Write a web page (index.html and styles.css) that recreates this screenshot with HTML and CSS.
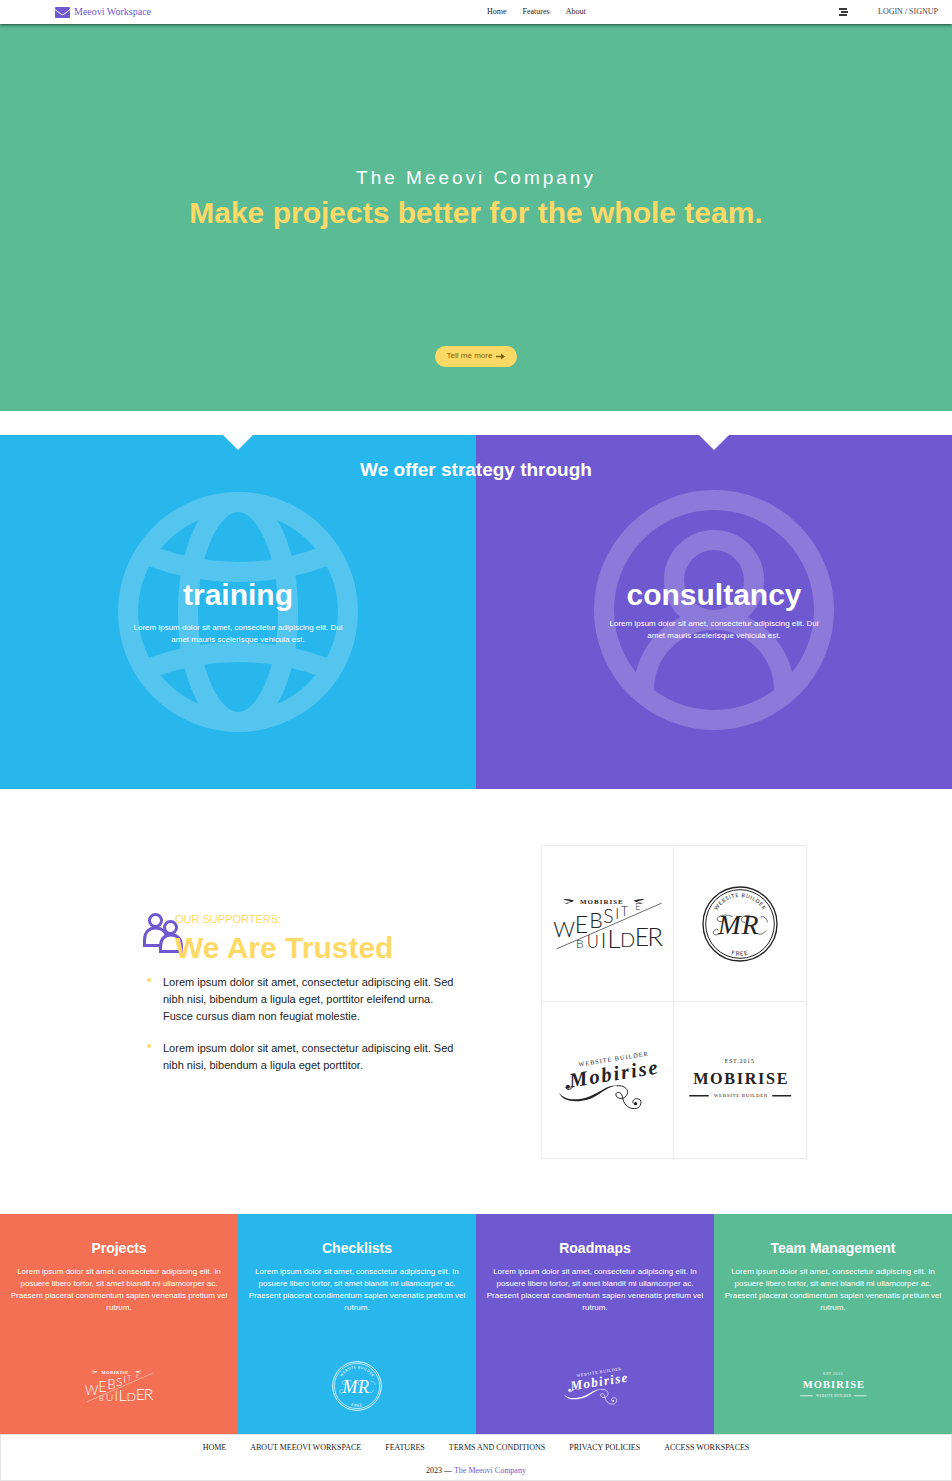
FILE: index.html
```html
<!DOCTYPE html>
<html lang="en">
<head>
<meta charset="utf-8">
<title>Meeovi Workspace</title>
<link rel="stylesheet" href="styles.css">
</head>
<body>
<svg class="sprite" aria-hidden="true">
  <defs>
    <path id="seal-top" d="M34 113 A80 80 0 0 1 194 113"/>
    <path id="seal-bottom" d="M18 113 A96 96 0 0 0 210 113"/>
  </defs>
  <symbol id="logo-website" viewBox="0 0 336 170">
    <g fill="currentColor">
      <text x="84" y="26" class="logo-serif" font-size="21" font-weight="bold" letter-spacing="3">MOBIRISE</text>
      <path d="M33 12 q18 -2 34 5 q-12 8 -25 4 q10 0 14 -3 q-12 -1 -23 -6z M35 20 q6 6 16 4 q-9 6 -16 -4z M278 12 q-18 -2 -34 5 q12 8 25 4 q-10 0 -14 -3 q12 -1 23 -6z M276 20 q-6 6 -16 4 q9 6 16 -4z"/>
      <g class="logo-thin">
        <text x="4" y="126" font-size="64">W</text>
        <text x="68" y="115" font-size="70">E</text>
        <text x="112" y="100" font-size="64">B</text>
        <text x="154" y="85" font-size="58">S</text>
        <text x="190" y="72" font-size="46">I</text>
        <text x="206" y="62" font-size="38">T</text>
        <text x="250" y="46" font-size="26">E</text>
        <text x="72" y="158" font-size="36">B</text>
        <text x="104" y="158" font-size="50">U</text>
        <text x="146" y="158" font-size="64">I</text>
        <text x="166" y="158" font-size="78">L</text>
        <text x="204" y="156" font-size="60">D</text>
        <text x="248" y="154" font-size="74">E</text>
        <text x="286" y="153" font-size="78">R</text>
      </g>
    </g>
    <path d="M14 161 L329 24" fill="none" stroke="currentColor" stroke-width="2"/>
  </symbol>
  <symbol id="logo-seal" viewBox="0 0 228 228">
    <g fill="none" stroke="currentColor">
      <circle cx="114" cy="114" r="111" stroke-width="4"/>
      <circle cx="114" cy="114" r="103" stroke-width="3"/>
      <path d="M54 143 C38 152 30 142 36 134 Q44 126 50 133 M66 104 C48 112 40 100 50 92 Q68 82 92 92 M130 110 C108 106 118 86 145 88 M166 143 q16 6 26 -10 M176 92 q20 0 20 17" stroke-width="2"/>
    </g>
    <g fill="currentColor">
      <text class="logo-seal-text" font-size="16" letter-spacing="2" text-anchor="middle"><textPath href="#seal-top" startOffset="50%">WEBSITE BUILDER</textPath></text>
      <text class="logo-seal-text" font-size="18" letter-spacing="3" text-anchor="middle"><textPath href="#seal-bottom" startOffset="50%">FREE</textPath></text>
      <text class="logo-script" x="48" y="144" font-size="82">M</text>
      <text class="logo-script" x="119" y="144" font-size="82">R</text>
    </g>
  </symbol>
  <symbol id="logo-script" viewBox="0 0 300 178">
    <g fill="currentColor">
      <text class="logo-serif" transform="translate(62 47) rotate(-9)" font-size="19" letter-spacing="3">WEBSITE BUILDER</text>
      <text class="logo-script" transform="translate(36 110) rotate(-9)" font-size="62" font-weight="bold" letter-spacing="6">Mobirise</text>
      <path d="M2 126 C20 150 58 150 94 137 C130 123 150 99 183 105 C150 104 132 129 99 143 C57 158 13 154 2 126z"/>
      <circle cx="233" cy="159" r="5"/>
      <circle cx="29" cy="108" r="6"/>
    </g>
    <path d="M176 105 C207 102 218 125 201 139 C188 149 171 139 174 129 C177 122 191 124 193 136 C196 157 207 174 230 174 C252 174 256 145 239 144 C229 143 222 150 226 158 M23 108 C22 120 40 118 44 106" fill="none" stroke="currentColor" stroke-width="3"/>
  </symbol>
  <symbol id="logo-est" viewBox="0 6 310 130">
    <g fill="currentColor" text-anchor="middle">
      <text class="logo-serif" x="153" y="18" font-size="17" letter-spacing="3">EST.2015</text>
      <text class="logo-serif" x="157" y="82" font-size="49" font-weight="bold" letter-spacing="5">MOBIRISE</text>
      <text class="logo-serif" x="156" y="122" font-size="15" letter-spacing="2">WEBSITE BUILDER</text>
      <path d="M0 115 H59 V119 H0z M251 115 H308 V119 H251z"/>
    </g>
  </symbol>
</svg>

<header class="topbar">
  <a class="brand" href="#">
    <svg class="brand-icon" viewBox="0 0 15 11" aria-hidden="true">
      <rect width="15" height="11" rx="1" fill="currentColor"/>
      <path d="M0 2.500 L6 7.200 Q7.500 8.200 9 7.200 L15 2.500" fill="none" stroke="#fff"/>
    </svg>
    Meeovi Workspace
  </a>
  <nav class="topnav" aria-label="Main">
    <a href="#">Home</a>
    <a href="#features">Features</a>
    <a href="#about">About</a>
  </nav>
  <div class="account">
    <button class="menu" type="button" aria-label="Menu">
      <svg viewBox="0 0 9 8" aria-hidden="true"><path d="M0 1 H8 M2 4 H9 M0 7 H8" stroke="currentColor" stroke-width="2"/></svg>
    </button>
    <a class="login" href="#">LOGIN / SIGNUP</a>
  </div>
</header>

<section class="hero">
  <p class="hero-kicker">The Meeovi Company</p>
  <h1 class="hero-title">Make projects better for the whole team.</h1>
  <a class="hero-button" href="#features">Tell me more
    <svg viewBox="0 0 9 7" aria-hidden="true"><path d="M0 3.500 H7" stroke="currentColor" stroke-width="1.500"/><path d="M5 0.500 L9 3.500 L5 6.500z" fill="currentColor"/></svg>
  </a>
</section>

<section class="strategy" id="features">
  <h2 class="strategy-title">We offer strategy through</h2>
  <article class="offer blue">
    <svg class="offer-icon" viewBox="-120 -120 240 240" aria-hidden="true">
      <g fill="none" stroke="#fff" stroke-width="20">
        <circle r="110"/><ellipse rx="50" ry="110"/>
        <path d="M-88 -56 Q0 -24 88 -56 M-88 56 Q0 24 88 56"/>
      </g>
    </svg>
    <div class="offer-text">
      <h3>training</h3>
      <p>Lorem ipsum dolor sit amet, consectetur adipiscing elit. Dui amet mauris scelerisque vehicula est.</p>
    </div>
  </article>
  <article class="offer purple">
    <svg class="offer-icon raised" viewBox="-120 -120 240 240" aria-hidden="true">
      <g fill="none" stroke="#fff" stroke-width="20">
        <circle r="110"/><circle cy="-30" r="40"/>
        <path d="M-70 80 A70 70 0 0 1 70 80"/>
      </g>
    </svg>
    <div class="offer-text close">
      <h3>consultancy</h3>
      <p>Lorem ipsum dolor sit amet, consectetur adipiscing elit. Dui amet mauris scelerisque vehicula est.</p>
    </div>
  </article>
</section>

<section class="supporters" id="about">
  <div class="trust">
    <div class="trust-head">
      <svg class="trust-icon" viewBox="0 0 40 40" aria-hidden="true">
        <g fill="#fff" stroke="currentColor" stroke-width="3">
          <path d="M1.500 32.500 V27 C1.500 19 6 15 12.500 15 S24 19 24 27 V32.500z"/>
          <circle cx="12.500" cy="7.500" r="6"/>
          <path d="M17.500 38.500 V34 C17.500 26 21 22 28 22 S38.500 26 38.500 34 V38.500z"/>
          <circle cx="27.500" cy="14.500" r="6"/>
        </g>
      </svg>
      <div class="trust-title">
        <p>OUR SUPPORTERS:</p>
        <h2>We Are Trusted</h2>
      </div>
    </div>
    <ul class="trust-list">
      <li>Lorem ipsum dolor sit amet, consectetur adipiscing elit. Sed nibh nisi, bibendum a ligula eget, porttitor eleifend urna. Fusce cursus diam non feugiat molestie.</li>
      <li>Lorem ipsum dolor sit amet, consectetur adipiscing elit. Sed nibh nisi, bibendum a ligula eget porttitor.</li>
    </ul>
  </div>
  <div class="logos">
    <div><svg class="mark website"><use href="#logo-website"/></svg></div>
    <div><svg class="mark seal"><use href="#logo-seal"/></svg></div>
    <div><svg class="mark script"><use href="#logo-script"/></svg></div>
    <div><svg class="mark est"><use href="#logo-est"/></svg></div>
  </div>
</section>

<section class="cards">
  <article class="card coral">
    <h3>Projects</h3>
    <p>Lorem ipsum dolor sit amet, consectetur adipiscing elit. In posuere libero tortor, sit amet blandit mi ullamcorper ac. Praesent placerat condimentum sapien venenatis pretium vel rutrum.</p>
    <div class="card-logo"><svg class="mark website"><use href="#logo-website"/></svg></div>
  </article>
  <article class="card blue">
    <h3>Checklists</h3>
    <p>Lorem ipsum dolor sit amet, consectetur adipiscing elit. In posuere libero tortor, sit amet blandit mi ullamcorper ac. Praesent placerat condimentum sapien venenatis pretium vel rutrum.</p>
    <div class="card-logo"><svg class="mark seal"><use href="#logo-seal"/></svg></div>
  </article>
  <article class="card purple">
    <h3>Roadmaps</h3>
    <p>Lorem ipsum dolor sit amet, consectetur adipiscing elit. In posuere libero tortor, sit amet blandit mi ullamcorper ac. Praesent placerat condimentum sapien venenatis pretium vel rutrum.</p>
    <div class="card-logo"><svg class="mark script"><use href="#logo-script"/></svg></div>
  </article>
  <article class="card green">
    <h3>Team Management</h3>
    <p>Lorem ipsum dolor sit amet, consectetur adipiscing elit. In posuere libero tortor, sit amet blandit mi ullamcorper ac. Praesent placerat condimentum sapien venenatis pretium vel rutrum.</p>
    <div class="card-logo"><svg class="mark est"><use href="#logo-est"/></svg></div>
  </article>
</section>

<footer class="footer">
  <nav class="footer-nav" aria-label="Footer">
    <a href="#">HOME</a>
    <a href="#">ABOUT MEEOVI WORKSPACE</a>
    <a href="#">FEATURES</a>
    <a href="#">TERMS AND CONDITIONS</a>
    <a href="#">PRIVACY POLICIES</a>
    <a href="#">ACCESS WORKSPACES</a>
  </nav>
  <p class="copyright">2023 — <a href="#">The Meeovi Company</a></p>
</footer>
</body>
</html>
```
FILE: styles.css
```css
* { box-sizing: border-box; }
body {
  margin: 0;
  background: #fff;
  color: #232323;
  font-family: "Liberation Sans", Arial, sans-serif;
  font-size: 8px;
  line-height: 12px;
}
h1, h2, h3, p, ul { margin: 0; padding: 0; }
a { color: inherit; text-decoration: none; }
svg { display: block; }
.sprite { display: none; }

.blue { background: #28b7ec; }
.purple { background: #6f59d1; }
.green { background: #5abb95; }
.coral { background: #f37054; }

.topbar {
  position: relative;
  display: grid;
  grid-template-columns: 487fr 352fr 113fr;
  align-items: center;
  height: 24px;
  background: #fff;
  box-shadow: 0 1px 3px rgba(0, 0, 0, 0.6);
  font-family: "Liberation Serif", "Times New Roman", serif;
}
.brand {
  display: flex;
  align-items: center;
  gap: 4px;
  padding-left: 55px;
  color: #6f59d1;
  font-size: 10px;
}
.brand-icon { width: 15px; height: 11px; }
.topnav { display: flex; gap: 16px; }
.account {
  display: flex;
  align-items: center;
  justify-content: space-between;
  padding-right: 14px;
}
.menu { padding: 0; border: 0; background: none; color: #3a3a3a; }
.menu svg { width: 9px; height: 8px; }
.login { color: #444; white-space: nowrap; }

.hero {
  display: flex;
  flex-direction: column;
  align-items: center;
  padding: 142px 16px 44px;
  background: #5abb95;
  text-align: center;
}
.hero-kicker { color: #fff; font-size: 19px; line-height: 24px; letter-spacing: 3px; }
.hero-title { margin-top: 5px; color: #ffd966; font-size: 30px; line-height: 36px; }
.hero-button {
  display: flex;
  align-items: center;
  gap: 4px;
  margin-top: 115px;
  padding: 4px 12px 5px;
  border-radius: 12px;
  background: #ffd966;
  color: #7c5f00;
}
.hero-button svg { width: 9px; height: 7px; }

.strategy {
  position: relative;
  display: grid;
  grid-template-columns: 1fr 1fr;
  margin-top: 24px;
}
.strategy-title {
  position: absolute;
  inset: 23px 0 auto;
  z-index: 1;
  color: #fff;
  font-size: 19px;
  line-height: 24px;
  text-align: center;
}
.offer {
  display: grid;
  justify-items: center;
  padding: 57px 16px;
  color: #fff;
  text-align: center;
}
.offer::before {
  content: "";
  position: absolute;
  top: 0;
  width: 30px;
  height: 15px;
  background: #fff;
  clip-path: polygon(0 0, 100% 0, 50% 100%);
}
.offer-icon { grid-area: 1 / 1; width: 240px; height: 240px; opacity: 0.2; }
.offer-icon.raised { margin-top: -2px; }
.offer-text { grid-area: 1 / 1; width: 216px; padding-top: 84px; }
.offer-text h3 { font-size: 30px; line-height: 38px; }
.offer-text p { margin-top: 8px; }
.offer-text.close p { margin-top: 4px; }

.supporters {
  display: grid;
  grid-template-columns: 320px 266px;
  justify-content: center;
  align-items: center;
  column-gap: 78px;
  padding: 56px 17px 55px 15px;
}
.trust { padding-bottom: 20px; }
.trust-head { display: flex; align-items: flex-start; }
.trust-icon { width: 40px; height: 40px; margin-top: 2px; color: #6f59d1; }
.trust-title { position: relative; margin-left: -8px; color: #ffd966; }
.trust-title p { font-size: 11px; line-height: 16px; }
.trust-title h2 { margin-top: 3px; font-size: 30px; line-height: 36px; }
.trust-list { margin-top: 8px; padding-left: 4px; list-style: none; font-size: 11px; line-height: 17px; }
.trust-list li { display: flex; gap: 12px; }
.trust-list li + li { margin-top: 15px; }
.trust-list li::before {
  content: "";
  flex: none;
  width: 4px;
  height: 4px;
  margin-top: 4px;
  border-radius: 50%;
  background: #ffd966;
}
.logos {
  display: grid;
  grid-template-columns: 1fr 1fr;
  border: 1px solid #ebebeb;
  color: #232323;
}
.logos > div {
  display: flex;
  align-items: center;
  justify-content: center;
  min-height: 156px;
}
.logos > div:nth-child(odd) { border-right: 1px solid #ebebeb; }
.logos > div:nth-child(-n+2) { border-bottom: 1px solid #ebebeb; }
.mark.website { width: 112px; height: 57px; }
.mark.seal { width: 76px; height: 76px; }
.mark.script { width: 100px; height: 59px; }
.mark.est { width: 103px; height: 43px; }
.logo-serif { font-family: "Liberation Serif", serif; }
.logo-thin { font-family: Lato, "Open Sans", sans-serif; font-weight: 300; }
.logo-seal-text { font-family: Lato, sans-serif; }
.logo-script { font-family: "Liberation Serif", serif; font-style: italic; }

.cards { display: grid; grid-template-columns: repeat(4, 1fr); }
.card { padding: 24px 8px 21px; color: #fff; text-align: center; }
.card h3 { font-size: 14px; line-height: 20px; }
.card p { margin-top: 8px; }
.card-logo {
  display: flex;
  align-items: center;
  justify-content: center;
  height: 54px;
  margin-top: 45px;
}
.card .mark.website { width: 70px; height: 36px; }
.card .mark.seal { width: 50px; height: 50px; }
.card .mark.script { width: 65px; height: 38px; }
.card .mark.est { width: 67px; height: 28px; }

.footer {
  padding: 7px 16px 3px;
  border: 1px solid #e4e4e4;
  font-family: "Liberation Serif", "Times New Roman", serif;
  text-align: center;
}
.footer-nav { display: flex; flex-wrap: wrap; justify-content: center; column-gap: 24px; }
.copyright { margin-top: 11px; }
.copyright a { color: #6f59d1; }
```
